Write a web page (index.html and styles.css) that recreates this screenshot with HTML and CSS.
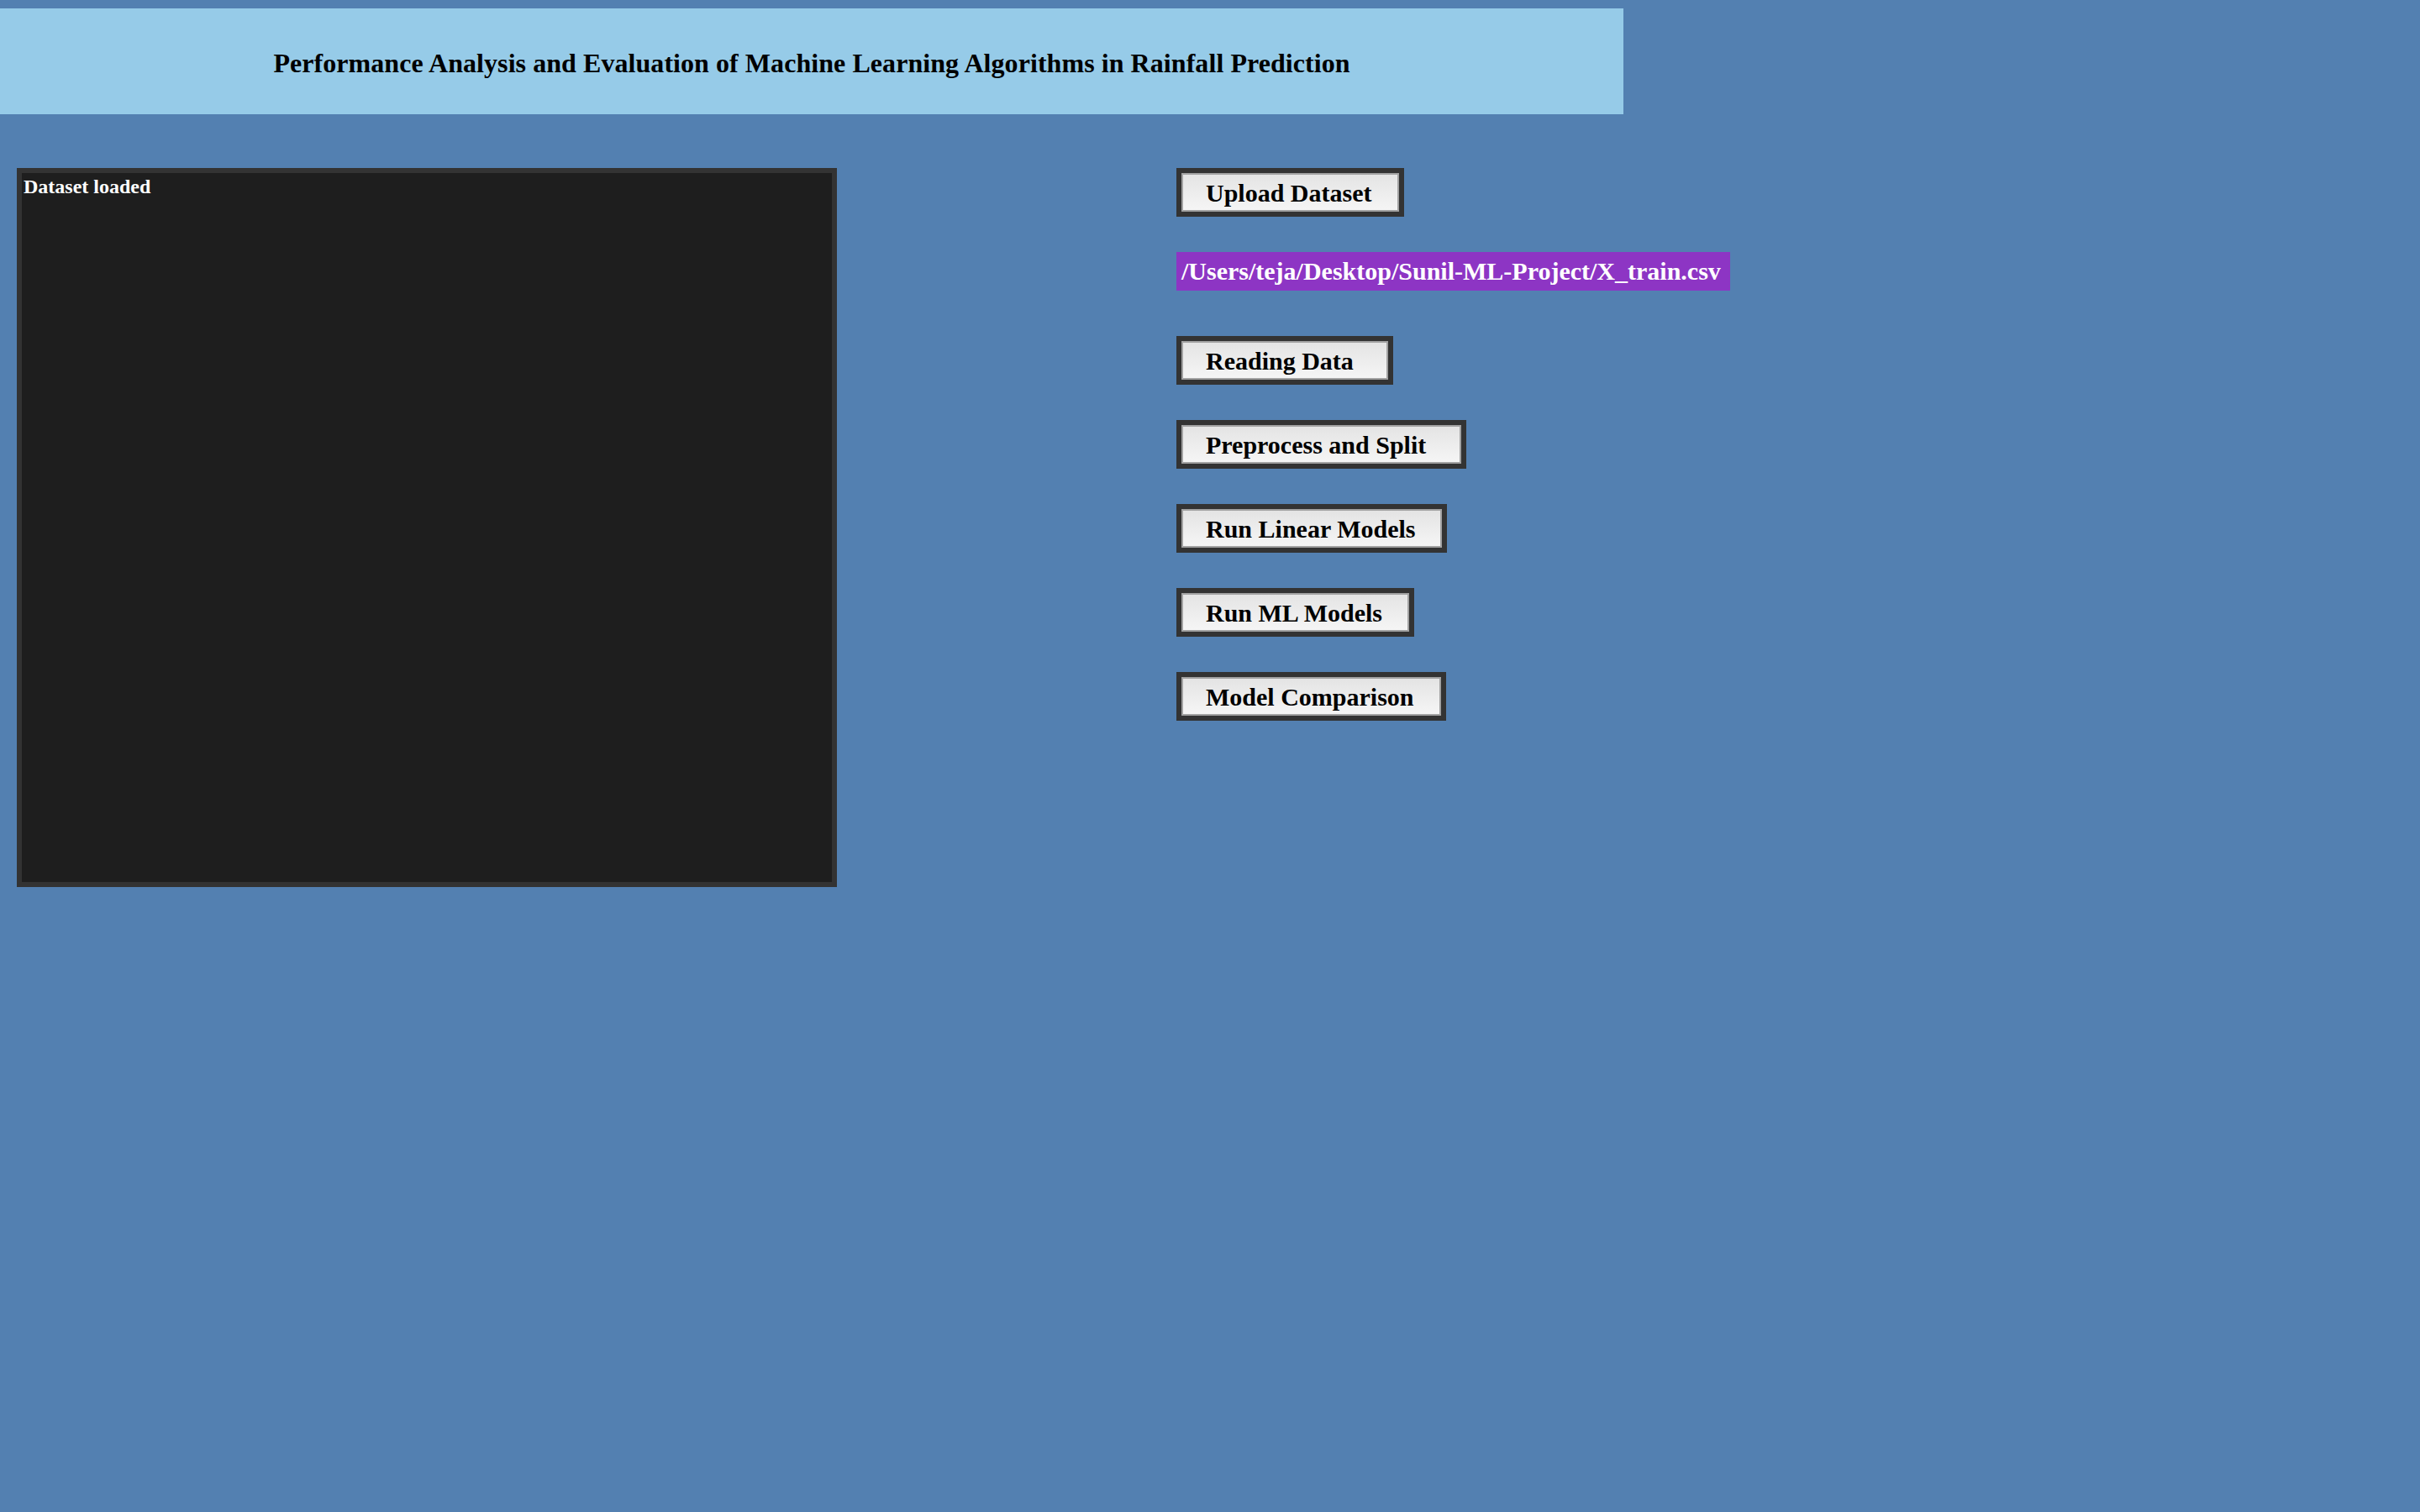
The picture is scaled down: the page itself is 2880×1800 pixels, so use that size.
FILE: index.html
```html
<!DOCTYPE html>
<html lang="en">
<head>
<meta charset="utf-8">
<title>Rainfall Prediction</title>
<link rel="stylesheet" href="styles.css">
</head>
<body>
<div class="page">
  <header class="title-bar">
    <h1 class="title">Performance Analysis and Evaluation of Machine Learning Algorithms in Rainfall Prediction</h1>
  </header>
  <main class="main">
    <section class="output-box">
      <div class="output-text">Dataset loaded</div>
    </section>
    <section class="controls">
      <button class="btn">Upload Dataset</button>
      <div class="path-label">/Users/teja/Desktop/Sunil-ML-Project/X_train.csv</div>
      <button class="btn btn-wide">Reading Data</button>
      <button class="btn btn-mid">Preprocess and Split</button>
      <button class="btn">Run Linear Models</button>
      <button class="btn">Run ML Models</button>
      <button class="btn">Model Comparison</button>
    </section>
  </main>
</div>
</body>
</html>
```

FILE: styles.css
```css
html, body {
  margin: 0;
  padding: 0;
}

body {
  background: #5380b1;
  font-family: "Liberation Serif", "Times New Roman", serif;
  min-height: 1800px;
}

.page {
  padding-top: 10px;
}

.title-bar {
  width: 1932px;
  height: 126px;
  background: #96cbe8;
  display: flex;
  align-items: center;
  justify-content: center;
}

.title {
  margin: 0;
  padding-top: 4px;
  font-size: 32px;
  font-weight: bold;
  letter-spacing: 0.06px;
  color: #000;
}

.main {
  display: grid;
  grid-template-columns: 976px auto;
  column-gap: 404px;
  margin-top: 64px;
  padding-left: 20px;
  align-items: start;
}

.output-box {
  box-sizing: border-box;
  width: 976px;
  height: 856px;
  border: 6px solid #333333;
  background: #1e1e1e;
  padding: 2px 2px 0;
}

.output-text {
  color: #ffffff;
  font-size: 24px;
  font-weight: bold;
  line-height: 28px;
}

.controls {
  display: flex;
  flex-direction: column;
  align-items: flex-start;
}

.btn {
  font-family: "Liberation Serif", "Times New Roman", serif;
  font-size: 30px;
  font-weight: bold;
  line-height: 34px;
  color: #000;
  height: 58px;
  box-sizing: border-box;
  border: 6px solid #333333;
  box-shadow: inset 0 0 0 2px #a2a2a2;
  background: linear-gradient(#e3e3e3, #f6f6f6);
  padding: 5px 32px 3px 29px;
  margin: 0 0 42px 0;
  cursor: pointer;
  white-space: nowrap;
}

.btn-wide {
  padding-right: 41px;
}

.btn-mid {
  padding-right: 42px;
}

.path-label {
  background: #8d35c4;
  color: #ffffff;
  font-size: 30px;
  font-weight: bold;
  line-height: 34px;
  padding: 6px 11px 6px 6px;
  margin: 0 0 54px 0;
  white-space: nowrap;
}
```
